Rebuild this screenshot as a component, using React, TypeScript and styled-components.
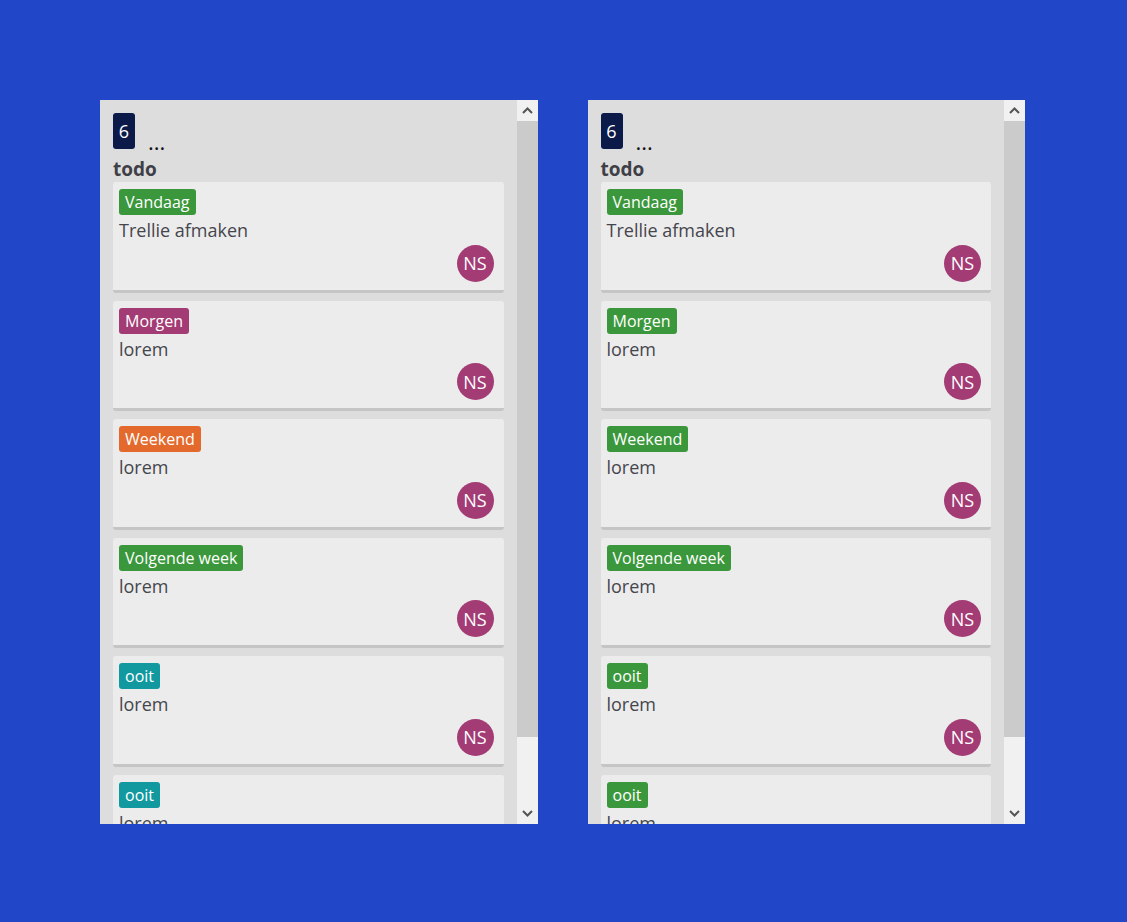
import React from 'react'
import styled, { createGlobalStyle } from 'styled-components'

const GlobalStyle = createGlobalStyle`
  html, body {
    margin: 0;
    padding: 0;
    background: #2146c8;
    font-family: "Open Sans", "Liberation Sans", sans-serif;
  }
`

const Board = styled.div`
  display: flex;
  gap: 50px;
  width: 925px;
  padding: 100px 0 0 100px;
`

const Column = styled.div`
  flex: 1;
  height: 724px;
  display: flex;
  background: #dddddd;
  overflow: hidden;
`

const ColumnBody = styled.div`
  flex: 1;
  overflow: hidden;
  padding: 13px 13px 0 13px;
`

const ColumnHead = styled.div`
  display: flex;
  align-items: flex-end;
  gap: 13px;
`

const CountBadge = styled.div`
  width: 22px;
  height: 36px;
  border-radius: 3px;
  background: #0c1a4a;
  color: #fff;
  font-size: 18px;
  display: flex;
  align-items: center;
  justify-content: center;
`

const More = styled.span`
  font-size: 22px;
  line-height: 14px;
  color: #111;
  margin-bottom: 1px;
`

const Title = styled.div`
  font-size: 19px;
  font-weight: 700;
  color: #3f4047;
  line-height: 26px;
  margin-top: 7px;
`

const Card = styled.div`
  background: #ececec;
  border-radius: 3px;
  border-bottom: 3px solid #c5c5c5;
  padding: 7px 10px 8px 6px;
  margin-bottom: 8px;
  display: flex;
  flex-direction: column;
  align-items: flex-start;
`

const Tag = styled.span<{ $color: string }>`
  display: inline-block;
  height: 26px;
  line-height: 26px;
  padding: 0 6px;
  border-radius: 3px;
  background: ${p => p.$color};
  color: #fff;
  font-size: 16px;
`

const CardText = styled.div`
  font-size: 18px;
  line-height: 24.6px;
  margin-top: 3px;
  color: #45464d;
`

const Avatar = styled.div`
  align-self: flex-end;
  width: 37px;
  height: 37px;
  border-radius: 50%;
  margin-top: 2px;
  background: #a33b74;
  color: #fff;
  font-size: 18px;
  display: flex;
  align-items: center;
  justify-content: center;
`

const Scrollbar = styled.div`
  width: 21px;
  display: flex;
  flex-direction: column;
  background: #f1f1f1;
`

const ScrollButton = styled.div`
  height: 21px;
  display: flex;
  align-items: center;
  justify-content: center;
  background: #f1f1f1;
`

const Thumb = styled.div`
  height: 616px;
  background: #cbcbcb;
`

const Track = styled.div`
  flex: 1;
`

const Chevron = ({ up }: { up?: boolean }) => (
  <svg width="11" height="7" viewBox="0 0 11 7">
    <path
      d={up ? 'M1 6 L5.5 1.5 L10 6' : 'M1 1 L5.5 5.5 L10 1'}
      fill="none"
      stroke="#555"
      strokeWidth="2"
    />
  </svg>
)

const GREEN = '#3b973b'
const PURPLE = '#a33b74'
const ORANGE = '#e4692d'
const TEAL = '#11999f'

type Item = { label: string; text: string; color: string }

const leftItems: Item[] = [
  { label: 'Vandaag', text: 'Trellie afmaken', color: GREEN },
  { label: 'Morgen', text: 'lorem', color: PURPLE },
  { label: 'Weekend', text: 'lorem', color: ORANGE },
  { label: 'Volgende week', text: 'lorem', color: GREEN },
  { label: 'ooit', text: 'lorem', color: TEAL },
  { label: 'ooit', text: 'lorem', color: TEAL },
]

const rightItems: Item[] = leftItems.map(i => ({ ...i, color: GREEN }))

const List = ({ items }: { items: Item[] }) => (
  <Column>
    <ColumnBody>
      <ColumnHead>
        <CountBadge>{items.length}</CountBadge>
        <More>...</More>
      </ColumnHead>
      <Title>todo</Title>
      {items.map((item, i) => (
        <Card key={i}>
          <Tag $color={item.color}>{item.label}</Tag>
          <CardText>{item.text}</CardText>
          <Avatar>NS</Avatar>
        </Card>
      ))}
    </ColumnBody>
    <Scrollbar>
      <ScrollButton><Chevron up /></ScrollButton>
      <Thumb />
      <Track />
      <ScrollButton><Chevron /></ScrollButton>
    </Scrollbar>
  </Column>
)

export default function App() {
  return (
    <>
      <GlobalStyle />
      <Board>
        <List items={leftItems} />
        <List items={rightItems} />
      </Board>
    </>
  )
}
